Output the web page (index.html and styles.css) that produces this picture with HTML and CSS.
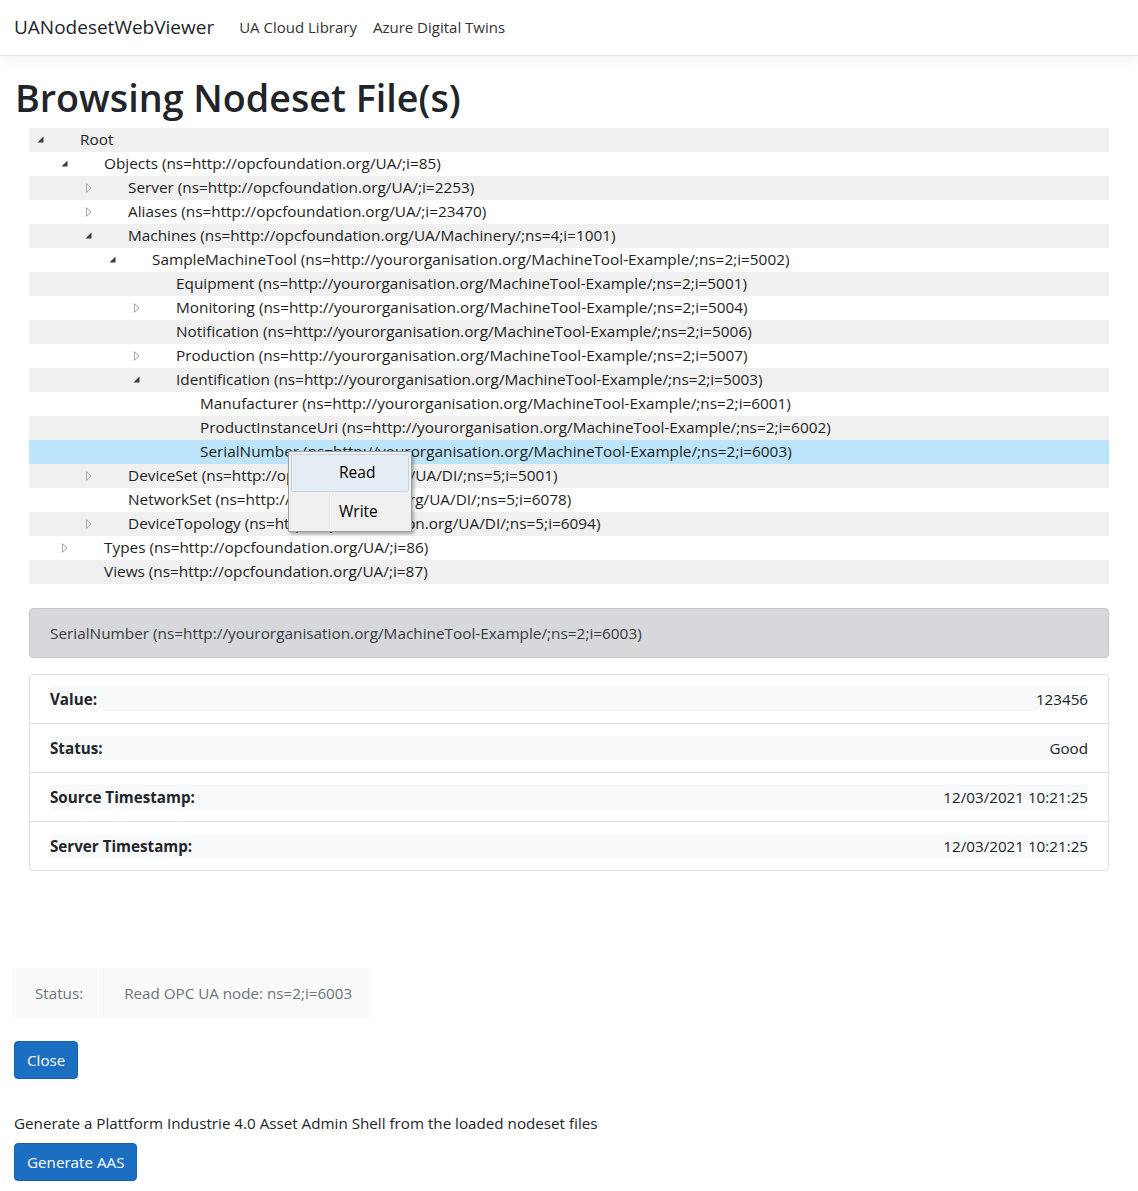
FILE: index.html
```html
<!DOCTYPE html>
<html lang="en">
<head>
<meta charset="utf-8">
<title>UANodesetWebViewer</title>
<link rel="stylesheet" href="styles.css">
</head>
<body>
<header class="navbar">
  <span class="brand">UANodesetWebViewer</span>
  <nav class="nav-links">
    <a class="nav-link" href="#">UA Cloud Library</a>
    <a class="nav-link" href="#">Azure Digital Twins</a>
  </nav>
</header>

<main class="content">
  <h1 class="page-title">Browsing Nodeset File(s)</h1>

  <section class="panel">
    <div class="tree">
      <div class="row lvl0"><span class="tw"><svg class="exp" viewBox="0 0 7 7"><path d="M6.5 0.5 V6.5 H0.5 Z"/></svg></span><span class="label">Root</span></div>
      <div class="row lvl1"><span class="tw"><svg class="exp" viewBox="0 0 7 7"><path d="M6.5 0.5 V6.5 H0.5 Z"/></svg></span><span class="label">Objects (ns=http://opcfoundation.org/UA/;i=85)</span></div>
      <div class="row lvl2"><span class="tw"><svg class="col" viewBox="0 0 6 10"><path d="M0.5 0.8 L5 5 L0.5 9.2 Z"/></svg></span><span class="label">Server (ns=http://opcfoundation.org/UA/;i=2253)</span></div>
      <div class="row lvl2"><span class="tw"><svg class="col" viewBox="0 0 6 10"><path d="M0.5 0.8 L5 5 L0.5 9.2 Z"/></svg></span><span class="label">Aliases (ns=http://opcfoundation.org/UA/;i=23470)</span></div>
      <div class="row lvl2"><span class="tw"><svg class="exp" viewBox="0 0 7 7"><path d="M6.5 0.5 V6.5 H0.5 Z"/></svg></span><span class="label">Machines (ns=http://opcfoundation.org/UA/Machinery/;ns=4;i=1001)</span></div>
      <div class="row lvl3"><span class="tw"><svg class="exp" viewBox="0 0 7 7"><path d="M6.5 0.5 V6.5 H0.5 Z"/></svg></span><span class="label">SampleMachineTool (ns=http://yourorganisation.org/MachineTool-Example/;ns=2;i=5002)</span></div>
      <div class="row lvl4"><span class="tw"></span><span class="label">Equipment (ns=http://yourorganisation.org/MachineTool-Example/;ns=2;i=5001)</span></div>
      <div class="row lvl4"><span class="tw"><svg class="col" viewBox="0 0 6 10"><path d="M0.5 0.8 L5 5 L0.5 9.2 Z"/></svg></span><span class="label">Monitoring (ns=http://yourorganisation.org/MachineTool-Example/;ns=2;i=5004)</span></div>
      <div class="row lvl4"><span class="tw"></span><span class="label">Notification (ns=http://yourorganisation.org/MachineTool-Example/;ns=2;i=5006)</span></div>
      <div class="row lvl4"><span class="tw"><svg class="col" viewBox="0 0 6 10"><path d="M0.5 0.8 L5 5 L0.5 9.2 Z"/></svg></span><span class="label">Production (ns=http://yourorganisation.org/MachineTool-Example/;ns=2;i=5007)</span></div>
      <div class="row lvl4"><span class="tw"><svg class="exp" viewBox="0 0 7 7"><path d="M6.5 0.5 V6.5 H0.5 Z"/></svg></span><span class="label">Identification (ns=http://yourorganisation.org/MachineTool-Example/;ns=2;i=5003)</span></div>
      <div class="row lvl5"><span class="tw"></span><span class="label">Manufacturer (ns=http://yourorganisation.org/MachineTool-Example/;ns=2;i=6001)</span></div>
      <div class="row lvl5"><span class="tw"></span><span class="label">ProductInstanceUri (ns=http://yourorganisation.org/MachineTool-Example/;ns=2;i=6002)</span></div>
      <div class="row lvl5 selected"><span class="tw"></span><span class="label">SerialNumber (ns=http://yourorganisation.org/MachineTool-Example/;ns=2;i=6003)</span></div>
      <div class="row lvl2"><span class="tw"><svg class="col" viewBox="0 0 6 10"><path d="M0.5 0.8 L5 5 L0.5 9.2 Z"/></svg></span><span class="label">DeviceSet (ns=http://opcfoundation.org/UA/DI/;ns=5;i=5001)</span></div>
      <div class="row lvl2"><span class="tw"></span><span class="label">NetworkSet (ns=http://opcfoundation.org/UA/DI/;ns=5;i=6078)</span></div>
      <div class="row lvl2"><span class="tw"><svg class="col" viewBox="0 0 6 10"><path d="M0.5 0.8 L5 5 L0.5 9.2 Z"/></svg></span><span class="label">DeviceTopology (ns=http://opcfoundation.org/UA/DI/;ns=5;i=6094)</span></div>
      <div class="row lvl1"><span class="tw"><svg class="col" viewBox="0 0 6 10"><path d="M0.5 0.8 L5 5 L0.5 9.2 Z"/></svg></span><span class="label">Types (ns=http://opcfoundation.org/UA/;i=86)</span></div>
      <div class="row lvl1"><span class="tw"></span><span class="label">Views (ns=http://opcfoundation.org/UA/;i=87)</span></div>

      <div class="context-menu">
        <div class="menu-item active"><span class="menu-text">Read</span></div>
        <div class="menu-item"><span class="menu-text">Write</span></div>
      </div>
    </div>

    <div class="alert">SerialNumber (ns=http://yourorganisation.org/MachineTool-Example/;ns=2;i=6003)</div>

    <ul class="list-card">
      <li class="list-item"><div class="kv"><strong>Value:</strong><span>123456</span></div></li>
      <li class="list-item"><div class="kv"><strong>Status:</strong><span>Good</span></div></li>
      <li class="list-item"><div class="kv"><strong>Source Timestamp:</strong><span>12/03/2021 10:21:25</span></div></li>
      <li class="list-item"><div class="kv"><strong>Server Timestamp:</strong><span>12/03/2021 10:21:25</span></div></li>
    </ul>
  </section>

  <table class="status-table">
    <tr><td class="st-label">Status:</td><td class="st-value">Read OPC UA node: ns=2;i=6003</td></tr>
  </table>

  <button class="btn">Close</button>

  <p class="aas-text">Generate a Plattform Industrie 4.0 Asset Admin Shell from the loaded nodeset files</p>
  <button class="btn">Generate AAS</button>
</main>
</body>
</html>
```

FILE: styles.css
```css
* { box-sizing: border-box; }

body {
  margin: 0;
  font-family: "Open Sans", "Noto Sans", sans-serif;
  font-size: 15.2px;
  line-height: 1.5;
  color: #212529;
  background: #fff;
}

.navbar {
  height: 56px;
  display: flex;
  align-items: center;
  padding: 0 14px;
  border-bottom: 1px solid #e5e5e5;
  box-shadow: 0 4px 12px rgba(0, 0, 0, 0.05);
}

.brand {
  font-size: 19px;
  color: #212529;
  margin-right: 25px;
}

.nav-links {
  display: flex;
  gap: 16px;
}

.nav-link {
  font-size: 15px;
  color: #333;
  text-decoration: none;
}

.content {
  padding: 0 14px 20px;
}

.page-title {
  margin: 18px 0 6px 1px;
  font-size: 37.7px;
  font-weight: 600;
  line-height: 48px;
  color: #212529;
}

.panel {
  padding: 0 15px;
}

.tree {
  position: relative;
  font-size: 15.35px;
}

.row {
  height: 24px;
  display: flex;
  align-items: center;
  white-space: nowrap;
  color: #1e1e1e;
}

.row:nth-child(odd) { background: #f0f0f0; }
.row.selected { background: #bce5fc; }

.lvl0 { padding-left: 0; }
.lvl1 { padding-left: 24px; }
.lvl2 { padding-left: 48px; }
.lvl3 { padding-left: 72px; }
.lvl4 { padding-left: 96px; }
.lvl5 { padding-left: 120px; }

.tw {
  flex: none;
  width: 51px;
  height: 24px;
  display: flex;
  align-items: center;
  padding-left: 8px;
}

.tw .exp {
  width: 7px;
  height: 7px;
  margin-top: -1px;
}
.tw .exp path { fill: #3c3c3c; }

.tw .col {
  width: 6px;
  height: 10px;
  margin-left: 1px;
}
.tw .col path { fill: none; stroke: #a6a6a6; stroke-width: 1; }

.context-menu {
  position: absolute;
  left: 259px;
  top: 323px;
  width: 124px;
  height: 81px;
  padding: 2px;
  background: #f0f0f0;
  border: 1px solid #a0a0a0;
  box-shadow: 2px 2px 3px rgba(0, 0, 0, 0.3);
  font-size: 15.5px;
}

.context-menu::before {
  content: "";
  position: absolute;
  left: 40px;
  top: 2px;
  bottom: 2px;
  width: 1px;
  background: #e2e3e3;
  box-shadow: 1px 0 0 #fff;
}

.menu-item {
  position: relative;
  height: 38px;
  display: flex;
  align-items: center;
  padding-left: 47px;
  border: 1px solid transparent;
  border-radius: 2px;
  color: #000;
}

.menu-item.active {
  background: #e6edf5;
  border-color: #c5d4e6;
}

.menu-item + .menu-item { margin-top: 1px; }

.alert {
  margin-top: 24px;
  padding: 12px 20px;
  background: #d6d8db;
  border: 1px solid #c6c8ca;
  border-radius: 4px;
  color: #383d41;
  line-height: 24px;
  font-size: 15.35px;
}

.list-card {
  list-style: none;
  margin: 16px 0 0;
  padding: 0;
  border: 1px solid rgba(0, 0, 0, 0.125);
  border-radius: 4px;
}

.list-item {
  padding: 12px 20px;
}

.list-item + .list-item {
  border-top: 1px solid rgba(0, 0, 0, 0.125);
}

.kv {
  display: flex;
  justify-content: space-between;
  background: #f8f9fa;
  line-height: 24px;
}

.kv strong { font-weight: 700; }

.status-table {
  margin: 97px 0 0 -1px;
  border-collapse: collapse;
  background: #fafafa;
}

.status-table td {
  padding: 12.5px 20px;
  color: #6c757d;
  line-height: 24px;
}

.st-label { border-right: 1px solid #f2f2f2; padding-left: 22px !important; }

.btn {
  display: block;
  margin-top: 24px;
  padding: 6px 12px;
  font-family: inherit;
  font-size: 15.2px;
  line-height: 24px;
  color: #fff;
  background: #1b6ec2;
  border: 1px solid #1861ac;
  border-radius: 4px;
}

.aas-text {
  margin: 32px 0 8px;
  line-height: 24px;
}

.aas-text + .btn { margin-top: 0; }
```
